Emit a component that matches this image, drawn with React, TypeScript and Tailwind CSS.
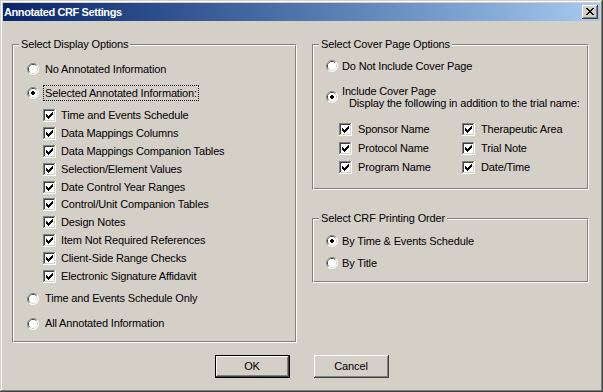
import React from "react";

const displayOptions = [
  "Time and Events Schedule",
  "Data Mappings Columns",
  "Data Mappings Companion Tables",
  "Selection/Element Values",
  "Date Control Year Ranges",
  "Control/Unit Companion Tables",
  "Design Notes",
  "Item Not Required References",
  "Client-Side Range Checks",
  "Electronic Signature Affidavit",
];

const coverOptions = [
  "Sponsor Name",
  "Therapeutic Area",
  "Protocol Name",
  "Trial Note",
  "Program Name",
  "Date/Time",
];

function Checkbox() {
  return (
    <svg width="13" height="13" viewBox="0 0 13 13" shapeRendering="crispEdges" className="shrink-0">
      <rect x="0" y="0" width="13" height="13" fill="#ffffff" />
      <rect x="0" y="0" width="12" height="12" fill="#808080" />
      <rect x="1" y="1" width="11" height="11" fill="#d4d0c8" />
      <rect x="1" y="1" width="10" height="10" fill="#404040" />
      <rect x="2" y="2" width="9" height="9" fill="#ffffff" />
      <path
        fill="#000"
        d="M9 3h1v1h-1z M8 4h2v1h-2z M3 5h1v1h-1z M7 5h3v1h-3z M3 6h2v1h-2z M6 6h3v1h-3z M3 7h5v1h-5z M4 8h3v1h-3z M5 9h1v1h-1z"
      />
    </svg>
  );
}

function Radio({ checked = false }: { checked?: boolean }) {
  return (
    <svg width="12" height="12" viewBox="0 0 12 12" className="shrink-0">
      <circle cx="6" cy="6" r="5.5" fill="#ffffff" />
      <path d="M2.1 9.9 A5.5 5.5 0 0 1 9.9 2.1" fill="none" stroke="#808080" strokeWidth="1" />
      <path d="M9.9 2.1 A5.5 5.5 0 0 1 2.1 9.9" fill="none" stroke="#ffffff" strokeWidth="1" />
      <path d="M2.8 9.2 A4.5 4.5 0 0 1 9.2 2.8" fill="none" stroke="#404040" strokeWidth="1" />
      <path d="M9.2 2.8 A4.5 4.5 0 0 1 2.8 9.2" fill="none" stroke="#d4d0c8" strokeWidth="1" />
      <circle cx="6" cy="6" r="4" fill="#ffffff" />
      {checked && <path d="M5 4h2v1h1v2h-1v1h-2v-1h-1v-2h1z" fill="#000" shapeRendering="crispEdges" />}
    </svg>
  );
}

function Group({ title, className, children }: { title: string; className: string; children: React.ReactNode }) {
  return (
    <div className={`relative border border-t-[#808080] border-l-[#808080] border-b-white border-r-white ${className}`}>
      <span className="absolute left-[6px] top-[-8px] bg-[#d4d0c8] px-[2px] leading-[14px] whitespace-nowrap">
        {title}
      </span>
      <div className="h-full border border-t-white border-l-white border-b-[#808080] border-r-[#808080]">
        {children}
      </div>
    </div>
  );
}

export default function App() {
  return (
    <div className="flex h-[392px] w-[603px] flex-col bg-[#d4d0c8] p-[3px] font-['Liberation_Sans',Arial,sans-serif] text-[11px] leading-[13px] tracking-[-0.15px] text-black shadow-[inset_-1px_-1px_#404040,inset_1px_1px_#d4d0c8,inset_-2px_-2px_#808080,inset_2px_2px_#ffffff]">
      {/* Title bar */}
      <div className="flex h-[18px] items-center justify-between bg-gradient-to-r from-[#0a246a] to-[#a6caf0] pl-[1px] pr-[2px]">
        <span className="text-[11px] font-bold tracking-[-0.4px] text-white">Annotated CRF Settings</span>
        <div className="flex h-[14px] w-[16px] items-center justify-center bg-[#d4d0c8] shadow-[inset_-1px_-1px_#404040,inset_1px_1px_#ffffff,inset_-2px_-2px_#808080,inset_2px_2px_#d4d0c8]">
          <svg width="8" height="7" viewBox="0 0 8 7" shapeRendering="crispEdges" className="mt-[-1px] ml-[-1px]">
            <path
              fill="#000"
              d="M0 0h2v1h-2z M6 0h2v1h-2z M1 1h2v1h-2z M5 1h2v1h-2z M2 2h4v1h-4z M3 3h2v1h-2z M2 4h4v1h-4z M1 5h2v1h-2z M5 5h2v1h-2z M0 6h2v1h-2z M6 6h2v1h-2z"
            />
          </svg>
        </div>
      </div>

      <div className="mt-[23px] flex pl-[9px]">
        {/* Left group */}
        <Group title="Select Display Options" className="h-[299px] w-[285px]">
          <div className="flex flex-col pl-[13px] pt-[14px]">
            <div className="flex h-[18px] items-center">
              <Radio />
              <span className="ml-[4px] border border-transparent px-[1px]">No Annotated Information</span>
            </div>
            <div className="flex h-[29px] items-center">
              <Radio checked />
              <span className="ml-[4px] border border-dotted border-black px-[1px] leading-[14px]">
                Selected Annotated Information:
              </span>
            </div>
            <div className="ml-[16px] flex flex-col">
              {displayOptions.map((o) => (
                <div key={o} className="flex h-[17.8px] items-center">
                  <Checkbox />
                  <span className="ml-[5px]">{o}</span>
                </div>
              ))}
            </div>
            <div className="flex h-[28px] items-center">
              <Radio />
              <span className="ml-[4px] border border-transparent px-[1px]">Time and Events Schedule Only</span>
            </div>
            <div className="flex h-[22px] items-center">
              <Radio />
              <span className="ml-[4px] border border-transparent px-[1px]">All Annotated Information</span>
            </div>
          </div>
        </Group>

        <div className="ml-[15px] flex w-[277px] flex-col">
          <Group title="Select Cover Page Options" className="h-[146px]">
            <div className="flex flex-col pl-[12px] pt-[11px]">
              <div className="flex h-[18px] items-center">
                <Radio />
                <span className="ml-[4px]">Do Not Include Cover Page</span>
              </div>
              <div className="mt-[10px] flex items-center">
                <Radio checked />
                <div className="ml-[4px] flex flex-col leading-[12px] whitespace-nowrap">
                  <span>Include Cover Page</span>
                  <span className="pl-[7px]">Display the following in addition to the trial name:</span>
                </div>
              </div>
              <div className="ml-[13px] mt-[11px] grid grid-cols-[123px_1fr] auto-rows-[19px]">
                {coverOptions.map((o) => (
                  <div key={o} className="flex items-center">
                    <Checkbox />
                    <span className="ml-[6px]">{o}</span>
                  </div>
                ))}
              </div>
            </div>
          </Group>

          <Group title="Select CRF Printing Order" className="mt-[28px] h-[65px]">
            <div className="flex flex-col pl-[12px] pt-[10px]">
              <div className="flex h-[22px] items-center">
                <Radio checked />
                <span className="ml-[4px]">By Time &amp; Events Schedule</span>
              </div>
              <div className="flex h-[22px] items-center">
                <Radio />
                <span className="ml-[4px]">By Title</span>
              </div>
            </div>
          </Group>
        </div>
      </div>

      {/* Buttons */}
      <div className="mt-[12px] flex justify-center gap-[24px]">
        <button className="h-[23px] w-[75px] border border-black bg-[#d4d0c8] shadow-[inset_-1px_-1px_#404040,inset_1px_1px_#ffffff,inset_-2px_-2px_#808080]">
          OK
        </button>
        <button className="h-[23px] w-[75px] bg-[#d4d0c8] shadow-[inset_-1px_-1px_#404040,inset_1px_1px_#ffffff,inset_-2px_-2px_#808080]">
          Cancel
        </button>
      </div>
    </div>
  );
}
